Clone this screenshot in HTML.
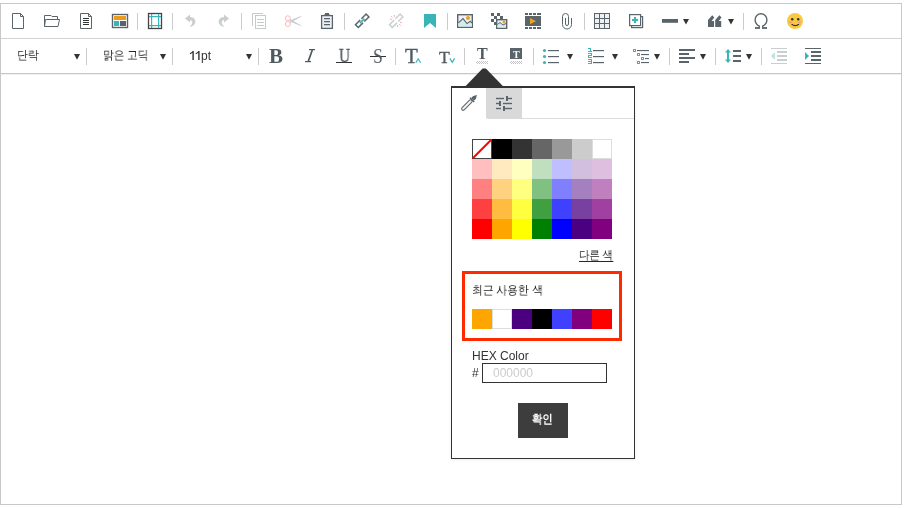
<!DOCTYPE html>
<html><head><meta charset="utf-8">
<style>
html,body{margin:0;padding:0;background:#fff;}
body{width:904px;height:508px;position:relative;overflow:hidden;font-family:"Liberation Sans",sans-serif;color:#333;}
.a{position:absolute;white-space:nowrap;will-change:transform;}
.k{font-size:12px;line-height:14px;color:#262626;transform-origin:0 0;will-change:transform;}
</style></head><body>
<!-- editor frame -->
<div class="a" style="left:0;top:3px;width:900px;height:500px;border:1px solid #c8c8c8;"></div>
<div class="a" style="left:1px;top:38px;width:900px;height:1px;background:#d2d2d2;"></div>
<div class="a" style="left:1px;top:73px;width:900px;height:1px;background:#c8c8c8;"></div>
<div class="a" style="left:1px;top:74px;width:900px;height:1px;background:#f0f0f0;"></div>

<svg class="a" style="left:0;top:0" width="904" height="508" viewBox="0 0 904 508">
<g fill="none" stroke="#59656b" stroke-width="1">
 <!-- new doc -->
 <path d="M12.5 13.5H20.5L23.5 16.5V28.5H12.5Z"/><path d="M20.5 13.5V16.5H23.5"/>
 <!-- folder -->
 <path d="M44.5 26.5V15.5H51L52 16.5H57.5V19.5"/><path d="M45.5 19.5H59.5L58 26.5H44.5Z"/>
 <!-- doc lines -->
 <path d="M80.5 13.5H88.5L91.5 16.5V28.5H80.5Z"/><path d="M88.5 13.5V16.5H91.5"/>
 <!-- template -->
 <rect x="112.5" y="14.5" width="15" height="13" stroke-width="1.4"/>
 <!-- frame -->
 <rect x="148.5" y="13.5" width="13" height="15" stroke="#444" stroke-width="1.3"/>
</g>
<g fill="#333"><rect x="83" y="18" width="6" height="1"/><rect x="83" y="20" width="6" height="1"/><rect x="83" y="22" width="6" height="1"/><rect x="83" y="24" width="6" height="1"/></g>
<rect x="114" y="16" width="12" height="4" fill="#ea9c1a"/>
<rect x="114" y="21" width="5" height="5" fill="#39b5ba"/>
<rect x="120" y="21" width="6" height="5" fill="#59656b"/>
<g fill="#39b5ba"><rect x="151" y="14" width="1.2" height="14"/><rect x="158" y="14" width="1.2" height="14"/><rect x="149" y="16" width="12" height="1.2"/><rect x="149" y="25" width="12" height="1.2"/></g>
<!-- separators toolbar1 -->
<g fill="#cccccc"><rect x="137" y="13" width="1" height="17"/><rect x="172" y="13" width="1" height="17"/><rect x="241" y="13" width="1" height="17"/><rect x="344" y="13" width="1" height="17"/><rect x="447" y="13" width="1" height="17"/><rect x="584" y="13" width="1" height="17"/><rect x="743" y="13" width="1" height="17"/></g>
<!-- undo / redo -->
<path id="undo" d="M185 18.5L190 14.5V17C194 17 196 20 195.2 23C194.5 25.3 192 26.6 189.5 26.8C191.6 25.3 192.6 23.5 192.2 21.8C191.8 20.6 190.8 20.2 190 20.2V22.5Z" fill="#c9ced1"/>
<path d="M185 18.5L190 14.5V17C194 17 196 20 195.2 23C194.5 25.3 192 26.6 189.5 26.8C191.6 25.3 192.6 23.5 192.2 21.8C191.8 20.6 190.8 20.2 190 20.2V22.5Z" fill="#c9ced1" transform="translate(414 0) scale(-1 1)"/>
<!-- copy -->
<g fill="none" stroke="#c5cacd"><path d="M252.5 26V13.5H263"/><rect x="255.5" y="15.5" width="10" height="13"/></g>
<g fill="#c5cacd"><rect x="257" y="19" width="7" height="1"/><rect x="257" y="22" width="7" height="1"/><rect x="257" y="25" width="7" height="1"/></g>
<!-- scissors -->
<g fill="none" stroke="#f7b5b8" stroke-width="0.95"><circle cx="287.8" cy="18.3" r="2.5"/><circle cx="287.8" cy="24" r="2.5"/></g>
<g fill="#c9ced1"><path d="M290 19.2L293.5 20.4V21.6L290 22.8Z"/><path d="M291 20L300.8 15.9L301.2 16.8L292.5 21.4Z"/><path d="M291 22L300.8 26.1L301.2 25.2L292.5 20.6Z"/></g>
<!-- clipboard -->
<rect x="321.6" y="15.6" width="10.8" height="12.8" fill="#eef0f6" stroke="#59656b" stroke-width="1.3"/>
<path d="M325 13H329V14.5H330V16H324V14.5H325Z" fill="#59656b"/>
<g fill="#59656b"><rect x="324" y="18" width="6" height="1.3"/><rect x="324" y="21" width="6" height="1.3"/><rect x="324" y="24" width="6" height="1.3"/></g>
<!-- link -->
<g transform="translate(362.2 20.8) rotate(-45)" fill="none" stroke="#59656b" stroke-width="1.5">
 <path d="M0.9 -2H7.5V2H0.9"/><path d="M-0.9 -2H-7.5V2H-0.9"/>
</g>
<g transform="translate(362.2 20.8) rotate(-45)"><rect x="-3.2" y="-0.9" width="6.4" height="1.8" fill="#39b5ba"/></g>
<!-- unlink -->
<g transform="translate(396.2 20.8) rotate(-45)" fill="none" stroke="#c9ced1" stroke-width="1.5">
 <path d="M0.9 -2H7.5V2H0.9"/><path d="M-0.9 -2H-7.5V2H-0.9"/>
</g>
<g stroke="#f7aeb1" stroke-width="1"><path d="M391 16.3L392.6 17.7"/><path d="M394.4 15V16.9"/><path d="M389.9 19.3H391.9"/><path d="M400 22.6H402"/><path d="M399.1 24L400.7 25.6"/><path d="M397.5 25V27"/></g>
<!-- bookmark -->
<path d="M424 14H436V28L430 23L424 28Z" fill="#39b5ba"/>
<!-- image -->
<rect x="457.7" y="14.7" width="14.6" height="12.6" fill="#eef0f5" stroke="#59656b" stroke-width="1.4"/>
<path d="M458.4 22.8L463 18.6L467 23.6L470.2 21.2L472 23.2V26.6H458.4Z" fill="#d3eded"/>
<path d="M458.4 22.8L463 18.6L467 23.6L470.2 21.2L472 23.2" fill="none" stroke="#59656b" stroke-width="1.1"/>
<circle cx="468" cy="18" r="2" fill="#eba21f"/>
<!-- mosaic -->
<g fill="#59656b"><rect x="491" y="13" width="3" height="3"/><rect x="497" y="13" width="3" height="3"/><rect x="494" y="16" width="3" height="3"/><rect x="500" y="16" width="3" height="3"/><rect x="491" y="19" width="3" height="3"/><rect x="494" y="22" width="3" height="3"/></g>
<rect x="496.7" y="19.7" width="10" height="8.6" fill="#eef0f5" stroke="#59656b" stroke-width="1.4"/>
<path d="M497.4 24.5L500 22.5L503 25L506 23.5V27.6H497.4Z" fill="#d3eded"/>
<path d="M497.4 24.5L500 22.5L503 25L506 23.5" fill="none" stroke="#59656b" stroke-width="1"/>
<circle cx="504" cy="22" r="1.5" fill="#eba21f"/>
<!-- video -->
<g fill="#59656b"><rect x="525" y="13" width="3" height="2"/><rect x="529" y="13" width="3" height="2"/><rect x="533" y="13" width="3" height="2"/><rect x="537" y="13" width="4" height="2"/>
<rect x="525" y="16" width="16" height="10"/>
<rect x="525" y="27" width="3" height="2"/><rect x="529" y="27" width="3" height="2"/><rect x="533" y="27" width="3" height="2"/><rect x="537" y="27" width="4" height="2"/></g>
<path d="M530 18L536 21.2L530 24.3Z" fill="#f0a21e"/>
<!-- paperclip -->
<path d="M571.5 18V24.5A4.5 4.5 0 0 1 562.5 24.5V16.5A3 3 0 0 1 568.5 16.5V24A1.5 1.5 0 0 1 565.5 24V18" fill="none" stroke="#59656b" stroke-width="1"/>
<!-- table -->
<rect x="594" y="13" width="16" height="16" fill="#59656b"/>
<g fill="#eef0f4"><rect x="595" y="14" width="4" height="4"/><rect x="600" y="14" width="4" height="4"/><rect x="605" y="14" width="4" height="4"/><rect x="595" y="19" width="4" height="4"/><rect x="600" y="19" width="4" height="4"/><rect x="605" y="19" width="4" height="4"/><rect x="595" y="24" width="4" height="4"/><rect x="600" y="24" width="4" height="4"/><rect x="605" y="24" width="4" height="4"/></g>
<!-- add -->
<g fill="#fff" stroke="#59656b" stroke-width="1.2"><rect x="631.6" y="16.6" width="11" height="11"/><rect x="629.6" y="14.6" width="11" height="11"/></g>
<g fill="#39b5ba"><rect x="634" y="17" width="2.1" height="6"/><rect x="632" y="19" width="6.1" height="2"/></g>
<!-- hr -->
<rect x="662" y="19" width="16" height="3.8" fill="#56636a"/>
<!-- quote -->
<path d="M708 27V20L712.2 15.2L714.3 17.5L711.6 21H714V27Z" fill="#59656b"/>
<path d="M715.2 27V20L719.4 15.2L721.5 17.5L718.8 21H721.2V27Z" fill="#59656b"/>
<!-- omega -->
<path d="M759.3 27.5V26.2C756.7 24.8 755.1 22.4 755.1 19.8C755.1 16.2 757.8 13.8 761 13.8C764.2 13.8 766.9 16.2 766.9 19.8C766.9 22.4 765.3 24.8 762.7 26.2V27.5" fill="none" stroke="#59656b" stroke-width="1.4"/>
<g fill="#59656b"><rect x="755" y="27.1" width="5" height="1.8"/><rect x="762" y="27.1" width="5" height="1.8"/></g>
<!-- smiley -->
<circle cx="795" cy="21" r="8" fill="#fbc93f"/>
<circle cx="792.2" cy="19.2" r="1.2" fill="#2b3238"/><circle cx="798.2" cy="19.2" r="1.2" fill="#2b3238"/>
<ellipse cx="790.3" cy="22.2" rx="1.6" ry="1" fill="#f59c84"/><ellipse cx="799.7" cy="22.2" rx="1.6" ry="1" fill="#f59c84"/>
<path d="M791.6 24.3Q795.3 26.9 799 24.3" fill="none" stroke="#2b3238" stroke-width="1.1"/>
<!-- dropdown triangles toolbar1 -->
<g fill="#333"><path d="M683 19H689L686 24.6Z"/><path d="M728 19H734L731 24.6Z"/></g>

<!-- ===== toolbar 2 ===== -->
<g fill="#cccccc"><rect x="86" y="48" width="1" height="17"/><rect x="172" y="48" width="1" height="17"/><rect x="258" y="48" width="1" height="17"/><rect x="395" y="48" width="1" height="17"/><rect x="464" y="48" width="1" height="17"/><rect x="533" y="48" width="1" height="17"/><rect x="669" y="48" width="1" height="17"/><rect x="715" y="48" width="1" height="17"/><rect x="761" y="48" width="1" height="17"/></g>
<g fill="#333"><path d="M74 54H80L77 59.8Z"/><path d="M160 54H166L163 59.8Z"/><path d="M246 54H252L249 59.8Z"/><path d="M567 54H573L570 59.8Z"/><path d="M612 54H618L615 59.8Z"/><path d="M654 54H660L657 59.8Z"/><path d="M700 54H706L703 59.8Z"/><path d="M746 54H752L749 59.8Z"/></g>
<!-- underline / strike lines -->
<rect x="336" y="62" width="16" height="1" fill="#333"/>
<rect x="370" y="56" width="16" height="1" fill="#333"/>
<!-- sup / sub carets -->
<path d="M415.8 62.8L418.2 58.8L420.6 62.8" fill="none" stroke="#39b5ba" stroke-width="1.2"/>
<path d="M449.8 58.4L452.2 62.4L454.6 58.4" fill="none" stroke="#39b5ba" stroke-width="1.2"/>
<!-- bg color box -->
<rect x="510" y="48" width="12" height="11" fill="#59656b"/>
<!-- bullet list -->
<g fill="#39b5ba"><circle cx="544.5" cy="50.5" r="1.6"/><circle cx="544.5" cy="56.5" r="1.6"/><circle cx="544.5" cy="62.5" r="1.6"/></g>
<g fill="#59656b"><rect x="548" y="50" width="11" height="1.2"/><rect x="548" y="56" width="11" height="1.2"/><rect x="548" y="62" width="11" height="1.2"/></g>
<!-- numbered list -->
<g fill="#39b5ba">
<rect x="588" y="48" width="3" height="1"/><rect x="590" y="48" width="1" height="4"/><rect x="588" y="51" width="4" height="1"/>
<rect x="588" y="53" width="4" height="1"/><rect x="591" y="53" width="1" height="3"/><rect x="588" y="55" width="4" height="1"/><rect x="588" y="55" width="1" height="3"/><rect x="588" y="57" width="4" height="1"/>
<rect x="588" y="59" width="4" height="1"/><rect x="591" y="59" width="1" height="5"/><rect x="588" y="61" width="4" height="1"/><rect x="588" y="63" width="4" height="1"/>
</g>
<g fill="#59656b"><rect x="593" y="50" width="11" height="1.2"/><rect x="593" y="56" width="11" height="1.2"/><rect x="593" y="62" width="11" height="1.2"/></g>
<!-- multilevel -->
<g fill="#39b5ba"><rect x="633" y="49" width="3" height="3"/><rect x="637" y="53" width="3" height="3"/><rect x="641" y="57" width="3" height="3"/><rect x="637" y="61" width="3" height="3"/></g>
<g fill="#fff"><rect x="634" y="50" width="1" height="1"/><rect x="638" y="54" width="1" height="1"/><rect x="642" y="58" width="1" height="1"/><rect x="638" y="62" width="1" height="1"/></g>
<g fill="#59656b"><rect x="637" y="50" width="12" height="1.1"/><rect x="641" y="54" width="8" height="1.1"/><rect x="645" y="58" width="4" height="1.1"/><rect x="641" y="62" width="8" height="1.1"/></g>
<!-- align left -->
<g fill="#59656b"><rect x="679" y="49" width="16" height="2"/><rect x="679" y="53" width="10" height="2"/><rect x="679" y="57" width="16" height="2"/><rect x="679" y="61" width="10" height="2"/></g>
<!-- line height -->
<path d="M728 49L731 52.6H729V59.4H731L728 63L725 59.4H727V52.6H725Z" fill="#39b5ba"/>
<g fill="#59656b"><rect x="733" y="50" width="8" height="2"/><rect x="733" y="55" width="8" height="2"/><rect x="733" y="60" width="8" height="2"/></g>
<!-- outdent -->
<g fill="#c9ced1"><rect x="771" y="48" width="16" height="1"/><rect x="771" y="63" width="16" height="1"/><rect x="777" y="51" width="10" height="2"/><rect x="777" y="55" width="10" height="2"/><rect x="777" y="59" width="10" height="2"/></g>
<path d="M771 56L775 52V60Z" fill="#bfe3e3"/>
<!-- indent -->
<g fill="#59656b"><rect x="805" y="48" width="16" height="1"/><rect x="805" y="63" width="16" height="1"/><rect x="811" y="51" width="10" height="2"/><rect x="811" y="55" width="10" height="2"/><rect x="811" y="59" width="10" height="2"/></g>
<path d="M809 56L805 52V60Z" fill="#39b5ba"/>
<!-- italic I -->
<g fill="#4e5a60"><rect x="309" y="49" width="6" height="1.2"/><rect x="305" y="61" width="6" height="1.2"/><path d="M311.4 50L313.2 50L309.2 61.2L307.4 61.2Z"/></g>
<!-- checker patterns -->
<g fill="#c4c4c4"><rect x="476" y="62" width="1" height="1"/><rect x="477" y="61" width="1" height="1"/><rect x="477" y="63" width="1" height="1"/><rect x="478" y="62" width="1" height="1"/><rect x="479" y="61" width="1" height="1"/><rect x="479" y="63" width="1" height="1"/><rect x="480" y="62" width="1" height="1"/><rect x="481" y="61" width="1" height="1"/><rect x="481" y="63" width="1" height="1"/><rect x="482" y="62" width="1" height="1"/><rect x="483" y="61" width="1" height="1"/><rect x="483" y="63" width="1" height="1"/><rect x="484" y="62" width="1" height="1"/><rect x="485" y="61" width="1" height="1"/><rect x="485" y="63" width="1" height="1"/><rect x="486" y="62" width="1" height="1"/><rect x="487" y="61" width="1" height="1"/><rect x="487" y="63" width="1" height="1"/><rect x="510" y="62" width="1" height="1"/><rect x="511" y="61" width="1" height="1"/><rect x="511" y="63" width="1" height="1"/><rect x="512" y="62" width="1" height="1"/><rect x="513" y="61" width="1" height="1"/><rect x="513" y="63" width="1" height="1"/><rect x="514" y="62" width="1" height="1"/><rect x="515" y="61" width="1" height="1"/><rect x="515" y="63" width="1" height="1"/><rect x="516" y="62" width="1" height="1"/><rect x="517" y="61" width="1" height="1"/><rect x="517" y="63" width="1" height="1"/><rect x="518" y="62" width="1" height="1"/><rect x="519" y="61" width="1" height="1"/><rect x="519" y="63" width="1" height="1"/><rect x="520" y="62" width="1" height="1"/><rect x="521" y="61" width="1" height="1"/><rect x="521" y="63" width="1" height="1"/></g>
</svg>

<!-- toolbar2 text -->
<div class="a k" style="left:17px;top:48px;transform:scaleX(0.9);">단락</div>
<div class="a k" style="left:103px;top:48px;transform:scaleX(0.89);">맑은 고딕</div>
<div class="a" style="left:201px;top:49px;font-size:12px;line-height:14px;color:#333;">pt</div>
<svg class="a" style="left:0;top:0" width="904" height="508"><g fill="#333"><path d="M192.4 60V52.7C191.7 53.4 190.8 53.9 189.9 54.2V53.1C191.1 52.6 192.1 51.7 192.7 50.9H193.8V60Z"/><path d="M198.2 60V52.7C197.5 53.4 196.6 53.9 195.7 54.2V53.1C196.9 52.6 197.9 51.7 198.5 50.9H199.6V60Z"/></g></svg>
<div class="a" style="left:269px;top:44px;font-family:'Liberation Serif',serif;font-weight:bold;font-size:21px;line-height:24px;color:#4e5a60;">B</div>
<div class="a" style="left:339px;top:44px;font-family:'Liberation Serif',serif;font-size:18px;line-height:24px;color:#4e5a60;-webkit-text-stroke:0.35px #4e5a60;transform:scaleX(0.85);transform-origin:0 0;">U</div>
<div class="a" style="left:373px;top:44px;font-family:'Liberation Serif',serif;font-size:20px;line-height:24px;color:#4e5a60;transform:scaleX(0.88);transform-origin:0 0;">S</div>
<div class="a" style="left:405px;top:44px;font-family:'Liberation Serif',serif;font-size:21px;line-height:24px;color:#4e5a60;-webkit-text-stroke:0.35px #4e5a60;">T</div>
<div class="a" style="left:439px;top:48px;font-family:'Liberation Serif',serif;font-size:17px;line-height:20px;transform:scaleX(1.04);transform-origin:0 0;color:#4e5a60;-webkit-text-stroke:0.3px #4e5a60;">T</div>
<div class="a" style="left:477px;top:44px;font-family:'Liberation Serif',serif;font-weight:bold;font-size:16px;line-height:20px;color:#4e5a60;">T</div>
<div class="a" style="left:513px;top:48px;font-family:'Liberation Serif',serif;font-weight:bold;font-size:10px;line-height:13px;color:#fff;">T</div>

<!-- popup -->
<svg class="a" style="left:0;top:0" width="904" height="508">
<path d="M465.2 86.5L482.6 68.6H485.9L503.3 86.5Z" fill="#333"/>
</svg>
<div class="a" style="left:451px;top:86px;width:182px;height:370px;border:1px solid #333;border-top:2px solid #333;background:#fff;box-shadow:0 1px 3px rgba(0,0,0,0.08);"></div>
<div class="a" style="left:486px;top:88px;width:36px;height:31px;background:#d9d9d9;border-radius:0 0 0 2px;"></div>
<div class="a" style="left:522px;top:118px;width:112px;height:1px;background:#dcdcdc;"></div>
<svg class="a" style="left:0;top:0" width="904" height="508">
<!-- eyedropper -->
<g transform="translate(469.2 102.7) rotate(-45)">
 <rect x="-10.1" y="-1.5" width="13.6" height="3" rx="1.5" fill="#f2f3f5" stroke="#59656b" stroke-width="1"/>
 <rect x="3.3" y="-3" width="1.5" height="6" fill="#59656b"/>
 <path d="M4.7 -1.9L7.6 -1.9L10.9 0L7.6 1.9L4.7 1.9Z" fill="#59656b"/>
</g>
<!-- sliders -->
<g fill="#59656b">
 <rect x="496" y="97.8" width="8" height="1.4"/><rect x="508" y="97.8" width="4" height="1.4"/><rect x="506" y="96" width="2" height="5"/>
 <rect x="496" y="102.8" width="3" height="1.4"/><rect x="503" y="102.8" width="9" height="1.4"/><rect x="499" y="101" width="2" height="5"/>
 <rect x="496" y="107.8" width="5" height="1.4"/><rect x="505" y="107.8" width="7" height="1.4"/><rect x="503" y="106" width="2" height="5"/>
</g>
<!-- colour grid -->
<g>
<rect x="472" y="139" width="20" height="20" fill="#fff"/>
<rect x="472.5" y="139.5" width="19" height="19" fill="none" stroke="#444"/>
<path d="M472.5 158.5L491.5 139.5" stroke="#f00" stroke-width="2"/>
<rect x="492" y="139" width="20" height="20" fill="#000"/>
<rect x="512" y="139" width="20" height="20" fill="#333"/>
<rect x="532" y="139" width="20" height="20" fill="#666"/>
<rect x="552" y="139" width="20" height="20" fill="#999"/>
<rect x="572" y="139" width="20" height="20" fill="#ccc"/>
<rect x="592.5" y="139.5" width="19" height="19" fill="#fff" stroke="#ddd"/>

<rect x="472" y="159" width="20" height="20" fill="#ffbfbf"/>
<rect x="492" y="159" width="20" height="20" fill="#ffe9bf"/>
<rect x="512" y="159" width="20" height="20" fill="#ffffbf"/>
<rect x="532" y="159" width="20" height="20" fill="#bfdfbf"/>
<rect x="552" y="159" width="20" height="20" fill="#bfbfff"/>
<rect x="572" y="159" width="20" height="20" fill="#d2bfe0"/>
<rect x="592" y="159" width="20" height="20" fill="#dfbfdf"/>

<rect x="472" y="179" width="20" height="20" fill="#ff8080"/>
<rect x="492" y="179" width="20" height="20" fill="#ffd280"/>
<rect x="512" y="179" width="20" height="20" fill="#ffff80"/>
<rect x="532" y="179" width="20" height="20" fill="#80c080"/>
<rect x="552" y="179" width="20" height="20" fill="#8080ff"/>
<rect x="572" y="179" width="20" height="20" fill="#a580c1"/>
<rect x="592" y="179" width="20" height="20" fill="#c080c0"/>

<rect x="472" y="199" width="20" height="20" fill="#ff4040"/>
<rect x="492" y="199" width="20" height="20" fill="#ffbc40"/>
<rect x="512" y="199" width="20" height="20" fill="#ffff40"/>
<rect x="532" y="199" width="20" height="20" fill="#40a040"/>
<rect x="552" y="199" width="20" height="20" fill="#4040ff"/>
<rect x="572" y="199" width="20" height="20" fill="#7840a1"/>
<rect x="592" y="199" width="20" height="20" fill="#a040a0"/>

<rect x="472" y="219" width="20" height="20" fill="#ff0000"/>
<rect x="492" y="219" width="20" height="20" fill="#ffa500"/>
<rect x="512" y="219" width="20" height="20" fill="#ffff00"/>
<rect x="532" y="219" width="20" height="20" fill="#008000"/>
<rect x="552" y="219" width="20" height="20" fill="#0000ff"/>
<rect x="572" y="219" width="20" height="20" fill="#4b0082"/>
<rect x="592" y="219" width="20" height="20" fill="#800080"/>
</g>
<!-- recent -->
<rect x="472" y="309" width="20" height="20" fill="#ffa500"/>
<rect x="492.5" y="309.5" width="19" height="19" fill="#fff" stroke="#ddd"/>
<rect x="512" y="309" width="20" height="20" fill="#4b0082"/>
<rect x="532" y="309" width="20" height="20" fill="#000"/>
<rect x="552" y="309" width="20" height="20" fill="#4040ff"/>
<rect x="572" y="309" width="20" height="20" fill="#800080"/>
<rect x="592" y="309" width="20" height="20" fill="#ff0000"/>
<!-- red highlight -->
<rect x="463.5" y="272.5" width="157" height="67" fill="none" stroke="#ff2b00" stroke-width="3"/>
</svg>
<div class="a k" style="left:579px;top:248px;text-decoration:underline;text-underline-offset:1.5px;transform:scaleX(0.87);">다른 색</div>
<div class="a k" style="left:472px;top:283px;transform:scaleX(0.9);">최근 사용한 색</div>
<div class="a" style="left:472px;top:349px;font-size:12px;line-height:14px;color:#333;">HEX Color</div>
<div class="a" style="left:472px;top:366px;font-size:12px;line-height:14px;color:#333;">#</div>
<div class="a" style="left:482px;top:363px;width:123px;height:18px;border:1px solid #333;"></div>
<div class="a" style="left:493px;top:366px;font-size:12px;line-height:14px;color:#ccc;">000000</div>
<div class="a" style="left:518px;top:403px;width:50px;height:35px;background:#3d3d3d;"></div>
<div class="a k" style="left:532px;top:412px;color:#fff;font-weight:bold;transform:scaleX(0.86);">확인</div>
</body></html>
